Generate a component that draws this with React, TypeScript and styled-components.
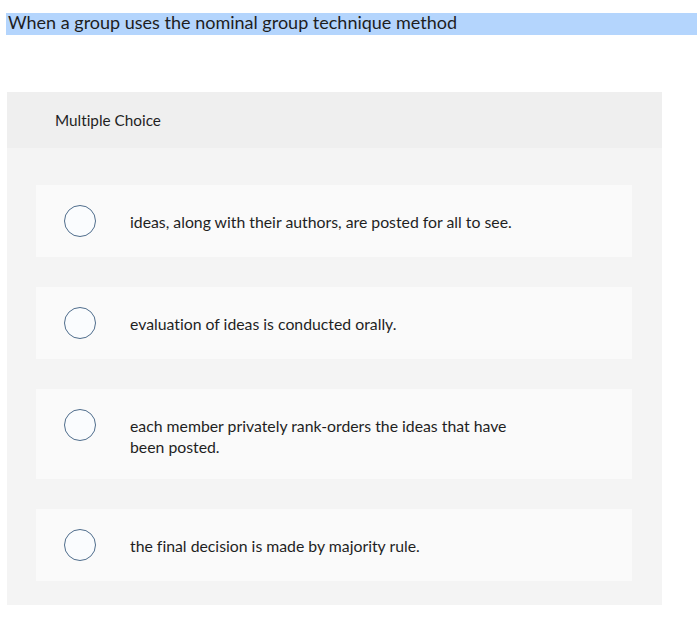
import React from "react";
import styled, { createGlobalStyle } from "styled-components";

const Global = createGlobalStyle`
  html, body { margin: 0; padding: 0; background: #ffffff; }
  body {
    font-family: "Lato", "Open Sans", Arial, sans-serif;
    color: #222;
    font-variant-ligatures: none;
  }
`;

const Page = styled.div`
  width: 700px;
  padding-top: 13px;
`;

const Question = styled.div`
  margin: 0 3px 0 6px;
  background: #b4d5fd;
  height: 22px;
  padding-left: 2px;
  font-size: 18px;
  line-height: 19px;
  color: #1e1e1e;
`;

const Panel = styled.div`
  margin: 57px 38px 0 7px;
  background: #f4f4f4;
  padding-bottom: 24px;
`;

const Header = styled.div`
  background: #efefef;
  height: 56px;
  display: flex;
  align-items: center;
  padding-left: 48px;
  font-size: 15.3px;
  color: #1f1f1f;
`;

const List = styled.div`
  display: flex;
  flex-direction: column;
  gap: 30px;
  padding: 37px 30px 0 29px;
`;

const Card = styled.label`
  display: flex;
  align-items: flex-start;
  background: #fafafa;
  padding: 20px 20px 20px 28px;
`;

const Radio = styled.span`
  flex: none;
  width: 32px;
  height: 32px;
  border: 1.5px solid #4f6d8c;
  border-radius: 50%;
  box-sizing: border-box;
  background: #fafcfe;
`;

const Text = styled.div`
  margin-left: 34px;
  padding: 6px 0 2px;
  font-size: 15.8px;
  line-height: 21px;
  color: #1f1f1f;
  max-width: 395px;
`;

const options = [
  "ideas, along with their authors, are posted for all to see.",
  "evaluation of ideas is conducted orally.",
  "each member privately rank-orders the ideas that have been posted.",
  "the final decision is made by majority rule.",
];

export default function App() {
  return (
    <Page>
      <Global />
      <Question>When a group uses the nominal group technique method</Question>
      <Panel>
        <Header>Multiple Choice</Header>
        <List>
          {options.map((o) => (
            <Card key={o}>
              <Radio />
              <Text>{o}</Text>
            </Card>
          ))}
        </List>
      </Panel>
    </Page>
  );
}
